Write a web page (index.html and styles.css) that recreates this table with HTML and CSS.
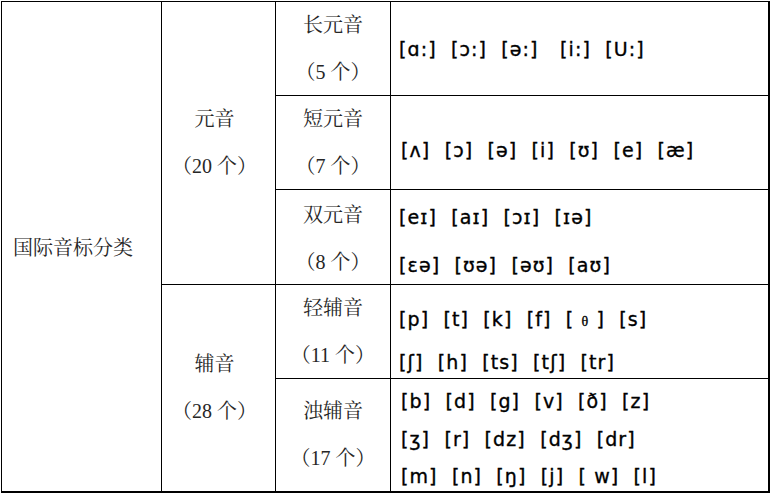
FILE: index.html
```html
<!DOCTYPE html>
<html lang="zh">
<head>
<meta charset="utf-8">
<title>国际音标分类</title>
<link rel="stylesheet" href="styles.css">
</head>
<body>
<div class="chart">
  <div class="cell title">国际音标分类</div>
  <div class="cell group span3"><div class="ln">元音</div><div class="ln">（20 个）</div></div>

  <div class="cell kind"><div class="ln">长元音</div><div class="ln">（5 个）</div></div>
  <div class="cell ipa p1"><div class="il">[ɑ:]  [ɔ:]  [ə:]   [i:]  [U:]</div></div>

  <div class="cell kind"><div class="ln">短元音</div><div class="ln">（7 个）</div></div>
  <div class="cell ipa p2"><div class="il">[ʌ]  [ɔ]  [ə]  [i]  [ʊ]  [e]  [æ]</div></div>

  <div class="cell kind k3"><div class="ln">双元音</div><div class="ln">（8 个）</div></div>
  <div class="cell ipa p3"><div class="il">[eɪ]  [aɪ]  [ɔɪ]  [ɪə]</div><div class="il">[ɛə]  [ʊə]  [əʊ]  [aʊ]</div></div>

  <div class="cell group span2"><div class="ln">辅音</div><div class="ln">（28 个）</div></div>
  <div class="cell kind"><div class="ln">轻辅音</div><div class="ln">（11 个）</div></div>
  <div class="cell ipa p4"><div class="il">[p]  [t]  [k]  [f]  [ <span class="th">θ</span> ]  [s]</div><div class="il">[ʃ]  [h]  [ts]  [tʃ]  [tr]</div></div>

  <div class="cell kind"><div class="ln">浊辅音</div><div class="ln">（17 个）</div></div>
  <div class="cell ipa p5"><div class="il">[b]  [d]  [g]  [v]  [ð]  [z]</div><div class="il">[ʒ]  [r]  [dz]  [dʒ]  [dr]</div><div class="il">[m]  [n]  [ŋ]  [j]  [ w]  [l]</div></div>
</div>
</body>
</html>
```

FILE: styles.css
```css
html, body {
  margin: 0;
  padding: 0;
  background: #fff;
}

.chart {
  display: grid;
  grid-template-columns: 159px 113px 114px 377px;
  grid-template-rows: 93px 93px 94px 93px 112px;
  gap: 1px;
  width: max-content;
  margin: 1px 0 0 1px;
  padding: 1px 2px 2px 1px;
  background: #000;
}

.cell {
  background: #fff;
  box-sizing: border-box;
}

.title,
.group,
.kind {
  font-family: "Liberation Serif", "Noto Serif CJK SC", "Noto Sans CJK SC", serif;
  font-size: 20px;
  color: #262626;
}

.title {
  grid-row: span 5;
  display: flex;
  align-items: center;
  padding-left: 11px;
  padding-bottom: 1px;
}

.span3 { grid-row: span 3; }
.span2 { grid-row: span 2; }

.group,
.kind {
  display: flex;
  flex-direction: column;
  justify-content: center;
  align-items: center;
}

.group {
  padding-right: 8px;
}

.k3 {
  padding-top: 3px;
}

.ln {
  height: 47px;
  line-height: 47px;
  white-space: nowrap;
}

.ipa {
  font-family: "DejaVu Sans", sans-serif;
  font-size: 19px;
  letter-spacing: 1.1px;
  color: #000;
  -webkit-text-stroke: 0.35px #000;
  white-space: pre;
  padding-left: 8px;
}

.th {
  font-family: "Liberation Serif", serif;
  font-size: 14px;
}

.p1 { padding-top: 27px; }
.p1 .il { line-height: 40px; }

.p2 { padding-top: 34px; padding-left: 10px; }
.p2 .il { line-height: 40px; }

.p3 { padding-top: 3px; }
.p3 .il { line-height: 48px; }

.p4 { padding-top: 14px; }
.p4 .il { line-height: 41px; }

.p5 { padding-top: 4px; padding-left: 10px; }
.p5 .il { line-height: 37.5px; }
```
